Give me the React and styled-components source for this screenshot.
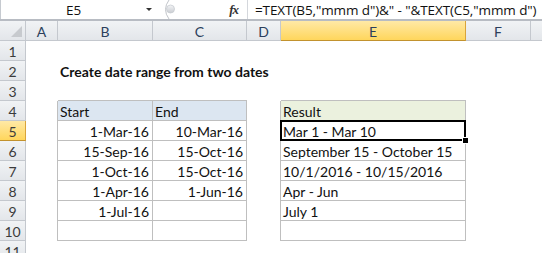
import React from 'react';
import styled, { createGlobalStyle } from 'styled-components';

const GlobalStyle = createGlobalStyle`
	html, body {
		margin: 0;
		padding: 0;
		background: #ffffff;
		overflow: hidden;
	}
	body {
		font-family: 'Lato', 'Liberation Sans', sans-serif;
	}
`;

// G is only a sliver at the right edge, its letter falls outside the window
const COLUMNS = ['A', 'B', 'C', 'D', 'E', 'F', 'G'];
const VISIBLE_LABELS = ['A', 'B', 'C', 'D', 'E', 'F'];
const GRID_COLUMNS = '26px 32px 95px 94px 34px 185px 65px 64px';
const ROW_COUNT = 11;

/**
 * What sits in the cells: row -> column -> cell
 */
const CELLS = {
	2: { B: { text: 'Create date range from two dates', bold: true } },
	4: {
		B: { text: 'Start', fill: '#dce6f1' },
		C: { text: 'End', fill: '#dce6f1' },
		E: { text: 'Result', fill: '#ebf1de' },
	},
	5: { B: { text: '1-Mar-16', right: true }, C: { text: '10-Mar-16', right: true }, E: { text: 'Mar 1 - Mar 10' } },
	6: { B: { text: '15-Sep-16', right: true }, C: { text: '15-Oct-16', right: true }, E: { text: 'September 15 - October 15' } },
	7: { B: { text: '1-Oct-16', right: true }, C: { text: '15-Oct-16', right: true }, E: { text: '10/1/2016 - 10/15/2016' } },
	8: { B: { text: '1-Apr-16', right: true }, C: { text: '1-Jun-16', right: true }, E: { text: 'Apr - Jun' } },
	9: { B: { text: '1-Jul-16', right: true }, E: { text: 'July 1' } },
};

// table blocks with borders
const TABLES = [
	{ cols: ['B', 'C'], from: 4, to: 10 },
	{ cols: ['E'], from: 4, to: 10 },
];

const ACTIVE = { col: 'E', row: 5 };

const Page = styled.div`
	width: 542px;
	height: 253px;
	display: flex;
	flex-direction: column;
	overflow: hidden;
`;

/**
 * Formula bar
 */
const FormulaBar = styled.div`
	height: 19px;
	display: flex;
	align-items: stretch;
	background: #ffffff;
	border-left: 1px solid #c6cad0;
`;

const NameBox = styled.div`
	width: 159px;
	display: flex;
	align-items: center;
`;

const NameText = styled.div`
	flex: 1;
	text-align: center;
	font-family: 'Open Sans', 'Liberation Sans', sans-serif;
	font-size: 13.5px;
	color: #111;
`;

const DropArrow = styled.div`
	width: 0;
	height: 0;
	margin-right: 8px;
	border-left: 3px solid transparent;
	border-right: 3px solid transparent;
	border-top: 3px solid #333;
`;

const FxArea = styled.div`
	width: 87px;
	display: flex;
	align-items: center;
	justify-content: space-between;
	border-right: 1px solid #d4d7dc;
`;

const Fx = styled.span`
	font-family: 'Liberation Serif', serif;
	font-style: italic;
	font-weight: bold;
	font-size: 13px;
	color: #333;
	margin-right: 9px;
	letter-spacing: -1px;
`;

const FormulaText = styled.div`
	flex: 1;
	padding-left: 7px;
	display: flex;
	align-items: center;
	font-family: 'Open Sans', 'Liberation Sans', sans-serif;
	font-size: 13.5px;
	color: #111;
	white-space: nowrap;
	letter-spacing: -0.1px;
`;

const BarGap = styled.div`
	height: 4px;
	border-top: 1px solid #b8bcc3;
	border-bottom: 1px solid #b8bcc3;
	background: #ffffff;
	box-sizing: border-box;
`;

/**
 * Sheet grid
 */
const Sheet = styled.div`
	display: grid;
	grid-template-columns: ${GRID_COLUMNS};
	grid-template-rows: 20px;
	grid-auto-rows: 20px;
`;

const HeaderCell = styled.div`
	box-sizing: border-box;
	display: flex;
	align-items: center;
	justify-content: center;
	border-right: 1px solid ${p => p.$active ? '#d9a43a' : '#c4c8ce'};
	border-bottom: 1px solid ${p => p.$active ? '#c2922e' : '#c4c8ce'};
	background: ${p => p.$active
		? 'linear-gradient(#ffe9a6, #ffd65c)'
		: 'linear-gradient(#f1f3f5, #e3e6ea)'};
	font-family: 'Lato', 'Liberation Sans', sans-serif;
	font-size: 14px;
	color: ${p => p.$row ? '#3b3b3b' : '#2c3f5c'};
	padding-top: 1px;
`;

const Corner = styled(HeaderCell)`
	position: relative;
	&::after {
		content: '';
		position: absolute;
		right: 3px;
		bottom: 3px;
		width: 0;
		height: 0;
		border-left: 11px solid transparent;
		border-bottom: 11px solid #c7cace;
	}
`;

const Cell = styled.div`
	position: relative;
	box-sizing: border-box;
	display: flex;
	align-items: center;
	justify-content: ${p => p.$right ? 'flex-end' : 'flex-start'};
	padding: 1px 3px 0 2px;
	font-family: 'Lato', 'Liberation Sans', sans-serif;
	font-size: 14px;
	font-weight: ${p => p.$bold ? 700 : 400};
	color: #111;
	white-space: nowrap;
	overflow: visible;
	background: ${p => p.$fill || 'transparent'};
	border-right: ${p => p.$boxed ? '1px solid #bfbfbf' : 'none'};
	border-bottom: ${p => p.$boxed ? '1px solid #bfbfbf' : 'none'};
	box-shadow: ${p => [
		p.$top ? '0 -1px 0 #bfbfbf' : null,
		p.$left ? '-1px 0 0 #bfbfbf' : null,
	].filter(Boolean).join(', ') || 'none'};
	z-index: ${p => p.$bold ? 2 : 'auto'};
`;

const Selection = styled.div`
	position: absolute;
	top: -1px;
	left: -1px;
	right: -1px;
	bottom: -1px;
	border: 2px solid #000;
	pointer-events: none;
	z-index: 3;
`;

const FillHandle = styled.div`
	position: absolute;
	right: -4px;
	bottom: -4px;
	width: 5px;
	height: 5px;
	background: #000;
	border: 1px solid #fff;
	z-index: 4;
`;

function Splitter() {
	return (
		<svg width="20" height="19" viewBox="0 0 20 19" style={{ marginLeft: 1 }}>
			<defs>
				<linearGradient id="knob" x1="0" y1="0" x2="0" y2="1">
					<stop offset="0" stopColor="#f4f5f7" />
					<stop offset="1" stopColor="#c9ccd1" />
				</linearGradient>
			</defs>
			<path d="M8 0 Q1 9.5 8 19" fill="none" stroke="#c2c5ca" strokeWidth="1" />
			<circle cx="9.5" cy="9" r="4" fill="url(#knob)" stroke="#c8cbd0" strokeWidth="0.8" />
		</svg>
	);
}

function tableEdges(col, row) {
	for (const t of TABLES) {
		if (t.cols.includes(col) && row >= t.from && row <= t.to) {
			return { boxed: true, top: row === t.from, left: col === t.cols[0] };
		}
	}
	return { boxed: false, top: false, left: false };
}

export default function App() {
	const rows = [];
	for (let r = 1; r <= ROW_COUNT; r++) rows.push(r);

	return (
		<Page>
			<GlobalStyle />
			<FormulaBar>
				<NameBox>
					<NameText>E5</NameText>
					<DropArrow />
				</NameBox>
				<FxArea>
					<Splitter />
					<Fx>fx</Fx>
				</FxArea>
				<FormulaText>=TEXT(B5,"mmm d")&amp;" - "&amp;TEXT(C5,"mmm d")</FormulaText>
			</FormulaBar>
			<BarGap />
			<Sheet>
				<Corner />
				{COLUMNS.map(c => (
					<HeaderCell key={c} $active={c === ACTIVE.col}>
						{VISIBLE_LABELS.includes(c) ? c : null}
					</HeaderCell>
				))}
				{rows.map(r => (
					<React.Fragment key={r}>
						<HeaderCell $row $active={r === ACTIVE.row}>{r}</HeaderCell>
						{COLUMNS.map(c => {
							const data = (CELLS[r] && CELLS[r][c]) || {};
							const edges = tableEdges(c, r);
							const isActive = c === ACTIVE.col && r === ACTIVE.row;
							return (
								<Cell
									key={c}
									$right={data.right}
									$bold={data.bold}
									$fill={data.fill}
									$boxed={edges.boxed}
									$top={edges.top}
									$left={edges.left}
								>
									{data.text}
									{isActive && <Selection />}
									{isActive && <FillHandle />}
								</Cell>
							);
						})}
					</React.Fragment>
				))}
			</Sheet>
		</Page>
	);
}
